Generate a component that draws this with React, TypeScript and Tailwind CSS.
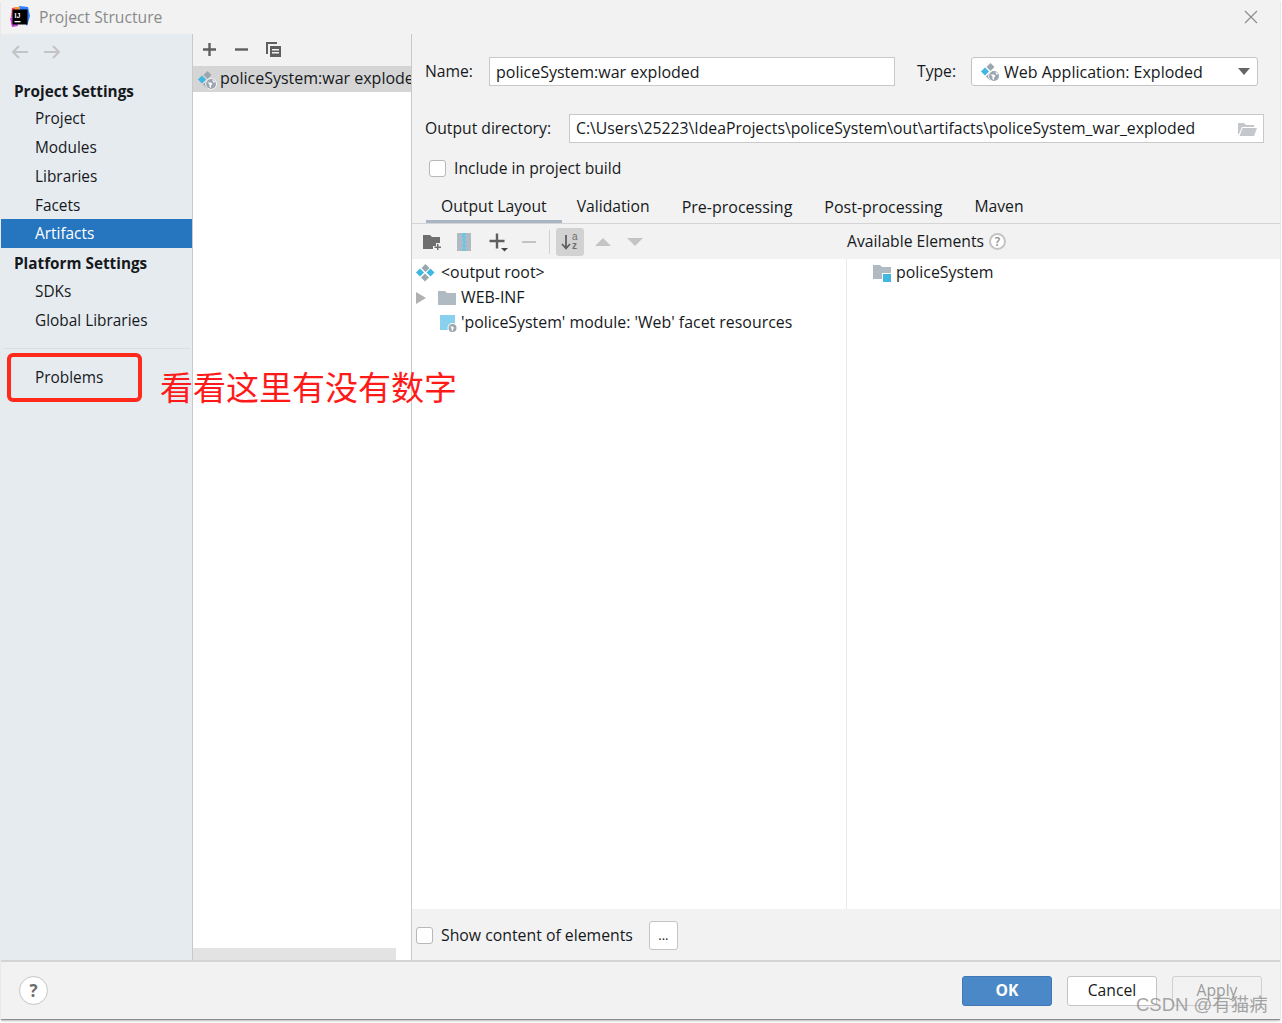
import { ReactNode } from "react";

const FONT = "font-['Open_Sans','Noto_Sans','Noto_Sans_CJK_SC',sans-serif]";

function ArtifactIcon({ globe = true }: { globe?: boolean }) {
  return (
    <svg width="20" height="20" viewBox="0 0 20 20" className="shrink-0">
      <path d="M5 5.500 9 9.500l-4 4-4-4z" fill="#40b6e0" />
      <path d="M10.500 1 14.500 5l-4 4-4-4z" fill="#9aa7b0" />
      <path d="M10 10.500 14 14.500l-4 4-4-4z" fill="#9aa7b0" />
      {globe ? (
        <g>
          <circle cx="14" cy="14" r="5.800" fill="#fff" />
          <circle cx="14" cy="14" r="5" fill="#9aa7b0" />
          <path d="M10.500 12.500h3.500l1.500 1.500-1.500 1.500v2.500l-1.500-1v-2.500zM15 9.800l3 1.500-1 2z" fill="#fff" />
        </g>
      ) : (
        <path d="M15.500 5.500 19.500 9.500l-4 4-4-4z" fill="#40b6e0" />
      )}
    </svg>
  );
}

function Folder({ className = "" }: { className?: string }) {
  return (
    <svg width="18" height="14" viewBox="0 0 18 14" className={className}>
      <path d="M0 0h7l2 2h9v12H0z" fill="#b0bac3" />
    </svg>
  );
}

function NavRow({ label, active = false }: { label: string; active?: boolean }) {
  return (
    <div className={`h-[29px] flex items-center pl-[34px] text-[15.4px] ${active ? "bg-[#2675bf] text-white" : "text-[#16191c]"}`}>
      {label}
    </div>
  );
}

function Tab({ children, active = false }: { children: ReactNode; active?: boolean }) {
  return (
    <div className={`h-[29px] pb-[1px] flex items-center justify-center border-b-[3px] ${active ? "border-[#a8b5c5] px-[15px]" : "border-transparent px-[16px]"}`}>
      {children}
    </div>
  );
}

function Checkbox() {
  return <div className="w-[17px] h-[17px] bg-white border border-[#b8b8b8] rounded-[3px] shrink-0" />;
}

export default function App() {
  return (
    <div className={`${FONT} relative w-[1282px] h-[1023px] bg-white overflow-hidden text-[15.7px] text-[#16191c]`}>
      <div className="h-[1020px] mx-px mr-[2px] bg-[#f2f2f2] border-b border-[#8c8c8c] flex flex-col shadow-[0_1px_2px_#bbb]">
        {/* title bar */}
        <div className="h-[34px] flex items-center pl-[8px] pr-[22px] shrink-0">
          <svg width="22" height="22" viewBox="0 0 22 22">
            <path d="M3 2 10 1 7 12 2 11z" fill="#ff3f6c" />
            <path d="M10 0l9 1 2 9-3 10-6-8z" fill="#2f7dff" />
            <path d="M1 12l6-2 2 10-6 1z" fill="#c13fd6" />
            <path d="M5 1l6 0-3 8z" fill="#ff9a2e" />
            <rect x="3.500" y="3.500" width="15" height="15" fill="#000" />
            <text x="5.500" y="11.500" fontSize="7" fontWeight="700" fill="#fff" fontFamily="Liberation Sans">IJ</text>
            <rect x="5.500" y="15" width="6" height="1.300" fill="#fff" />
          </svg>
          <span className="ml-[8px] pt-[2px] text-[#8a8a8a] text-[15.700px]">Project Structure</span>
          <svg width="14" height="14" viewBox="0 0 14 14" className="ml-auto" stroke="#8c8c8c" strokeWidth="1.200">
            <path d="M1 1l12 12M13 1 1 13" />
          </svg>
        </div>

        <div className="flex-1 flex min-h-0">
          {/* sidebar */}
          <div className="w-[191px] bg-[#e6ebf0] border-r border-[#c9c9c9] box-content shrink-0">
            <div className="h-[36px] flex items-center pl-[10px] gap-[14px]">
              <svg width="18" height="14" viewBox="0 0 18 14" fill="none" stroke="#c4c4c4" strokeWidth="2"><path d="M17 7H2M8 1 2 7l6 6" /></svg>
              <svg width="18" height="14" viewBox="0 0 18 14" fill="none" stroke="#c4c4c4" strokeWidth="2"><path d="M1 7h15M10 1l6 6-6 6" /></svg>
            </div>
            <div className="h-[33px] pt-[9px] pl-[13px] font-bold text-[15.300px] leading-[24px]">Project Settings</div>
            <div className="[&>div]:pt-[2px]">
              <NavRow label="Project" />
              <NavRow label="Modules" />
              <NavRow label="Libraries" />
              <NavRow label="Facets" />
            </div>
            <NavRow label="Artifacts" active />
            <div className="h-[29px] pt-[2px] pl-[13px] flex items-center font-bold text-[15.300px]">Platform Settings</div>
            <NavRow label="SDKs" />
            <NavRow label="Global Libraries" />
            <div className="h-[14px] flex items-end mx-[2px]"><div className="w-full h-px bg-[#dadee2]" /></div>
            <div className="h-[43px] flex items-center pl-[34px] mt-[7px] text-[15.4px]">Problems</div>
          </div>

          {/* artifact list */}
          <div className="w-[218px] bg-white border-r border-[#c9c9c9] box-content shrink-0 flex flex-col">
            <div className="h-[30px] pb-[2px] bg-[#f2f2f2] border-b border-[#d4d4d4] flex items-center pl-[8px] gap-[15px] shrink-0 box-content">
              <svg width="17" height="17" viewBox="0 0 17 17" fill="#5f5f5f"><path d="M7.300 2h2.400v5.300H15v2.400H9.700V15H7.300V9.700H2V7.300h5.300z" /></svg>
              <svg width="17" height="17" viewBox="0 0 17 17" fill="#5f5f5f"><rect x="2" y="7.300" width="13" height="2.400" /></svg>
              <svg width="17" height="17" viewBox="0 0 17 17" fill="#5f5f5f"><path d="M1 1h11v2H3v10H1z" /><path d="M5 5h11v11H5zm2 3v1.500h7V8zm0 3v1.500h7V11z" fillRule="evenodd" /></svg>
            </div>
            <div className="h-[25px] bg-[#d5d5d5] flex items-center pl-[4px] gap-[3px] overflow-hidden whitespace-nowrap shrink-0">
              <ArtifactIcon />
              <span className="text-[16px] pb-[3px]">policeSystem:war exploded</span>
            </div>
            <div className="mt-auto h-[12px] mr-[15px] bg-[#e3e3e3]" />
          </div>

          {/* artifact editor */}
          <div className="flex-1 min-w-0 flex flex-col">
            <div className="h-[23px] shrink-0" />
            <div className="flex items-center h-[29px] pl-[13px] pr-[22px] shrink-0">
              <span className="w-[64px]">Name:</span>
              <div className="w-[406px] h-[29px] bg-white border border-[#c9c9c9] flex items-center pl-[6px] text-[16px]">policeSystem:war exploded</div>
              <span className="ml-[22px] w-[54px]">Type:</span>
              <div className="flex-1 h-[29px] bg-white border border-[#c4c4c4] rounded-[3px] flex items-center pl-[8px] pr-[7px] gap-[4px] text-[16px]">
                <ArtifactIcon />
                <span>Web Application: Exploded</span>
                <span className="ml-auto w-0 h-0 border-l-[6px] border-r-[6px] border-t-[7px] border-l-transparent border-r-transparent border-t-[#666]" />
              </div>
            </div>
            <div className="flex items-center h-[29px] mt-[28px] pl-[13px] pr-[16px] shrink-0">
              <span className="w-[144px] whitespace-nowrap">Output directory:</span>
              <div className="flex-1 h-[29px] bg-white border border-[#c9c9c9] flex items-center pl-[6px] pr-[6px] text-[15.780px] whitespace-nowrap">
                <span>C:\Users\25223\IdeaProjects\policeSystem\out\artifacts\policeSystem_war_exploded</span>
                <svg width="19" height="15" viewBox="0 0 19 15" fill="#c4c8cc" className="ml-auto shrink-0">
                  <path d="M0 2h6l2 2h8v2H4L1 13H0z" />
                  <path d="M4.500 7H19l-3 8H1.500z" />
                </svg>
              </div>
            </div>
            <div className="flex items-center h-[17px] mt-[17px] pl-[17px] gap-[8px] shrink-0">
              <Checkbox />
              <span>Include in project build</span>
            </div>
            <div className="mt-[17px] h-[29px] pl-[14px] flex border-b border-[#d4d4d4] box-content shrink-0 -mb-px">
              <Tab active>Output Layout</Tab>
              <div className="flex -ml-px">
                <Tab>Validation</Tab>
                <Tab><span className="text-[16px]">Pre-processing</span></Tab>
                <Tab><span className="text-[16px]">Post-processing</span></Tab>
                <Tab>Maven</Tab>
              </div>
            </div>

            {/* toolbar */}
            <div className="h-[36px] flex items-center shrink-0">
              <div className="w-[434px] flex items-center pl-[11px] pt-[2px] shrink-0 h-full">
                <svg width="18" height="16" viewBox="0 0 18 16" fill="#6e6e6e"><path d="M0 1h7l2 2h8v6h-4v3h-3v3H0z" /><path d="M14 10h1.500v2.500H18V14h-2.500v2H14v-2h-2.500v-1.500H14z" /></svg>
                <svg width="14" height="18" viewBox="0 0 14 18" className="ml-[16px]"><rect width="14" height="18" fill="#b0bac3" /><path d="M5 0h4v2H8v2h1v2H8v2h1v2H8v2h1v2H8v2h1v2H5v-2h1v-2H5v-2h1V8H5V6h1V4H5z" fill="#6fc5e8" /></svg>
                <svg width="20" height="20" viewBox="0 0 20 20" className="ml-[18px]" fill="#5f5f5f"><path d="M6.800 1.500h2.400V7.800h6.300v2.400H9.200v6.300H6.800v-6.300H.5V7.800h6.300z" /><path d="M12 16h7l-3.500 3.500z" fill="#444" /></svg>
                <svg width="14" height="14" viewBox="0 0 14 14" className="ml-[13px]"><rect y="6" width="14" height="2" fill="#c4c4c4" /></svg>
                <div className="w-px h-[24px] bg-[#d0d0d0] ml-[13px]" />
                <div className="w-[28px] h-[28px] rounded-[3px] bg-[#d2d2d2] ml-[6px] flex items-center justify-center">
                  <svg width="20" height="20" viewBox="0 0 20 20" fill="none">
                    <path d="M6 3v13M2 12l4 4.500 4-4.500" stroke="#5f5f5f" strokeWidth="1.800" />
                    <text x="12" y="8" fontSize="10" fill="#6e6e6e" fontFamily="Liberation Sans">a</text>
                    <text x="12" y="17" fontSize="10" fontWeight="700" fill="#6e6e6e" fontFamily="Liberation Sans">z</text>
                  </svg>
                </div>
                <span className="ml-[11px] w-0 h-0 border-l-[8px] border-r-[8px] border-b-[8px] border-l-transparent border-r-transparent border-b-[#c4c4c4]" />
                <span className="ml-[16px] w-0 h-0 border-l-[8px] border-r-[8px] border-t-[8px] border-l-transparent border-r-transparent border-t-[#c4c4c4]" />
              </div>
              <div className="pl-[1px] pt-[2px] flex items-center gap-[5px]">
                <span>Available Elements</span>
                <span className="w-[17px] h-[17px] rounded-full border-2 border-[#c4c4c4] bg-white text-[#8f8f8f] text-[12px] font-semibold flex items-center justify-center">?</span>
              </div>
            </div>

            {/* output tree */}
            <div className="flex-1 bg-white flex min-h-0 text-[15.900px]">
              <div className="w-[435px] border-r border-[#e8e8e8] shrink-0 pt-[1px]">
                <div className="h-[25px] flex items-center pl-[3px] gap-[6px]">
                  <ArtifactIcon globe={false} />
                  <span>&lt;output root&gt;</span>
                </div>
                <div className="h-[25px] flex items-center pl-[4px]">
                  <span className="w-0 h-0 border-t-[6px] border-b-[6px] border-l-[10px] border-t-transparent border-b-transparent border-l-[#b0b0b0]" />
                  <Folder className="ml-[12px]" />
                  <span className="ml-[5px]">WEB-INF</span>
                </div>
                <div className="h-[25px] flex items-center pl-[27px]">
                  <svg width="19" height="20" viewBox="0 0 19 20" className="shrink-0">
                    <path d="M1 2h15v15H1z" fill="#87d0ee" />
                    <circle cx="13.500" cy="15" r="5" fill="#fff" />
                    <circle cx="13.500" cy="15" r="4" fill="#9aa7b0" />
                    <path d="M11 13.500h3l1 1.500-1 1.500v1.500l-1.500-1v-2z" fill="#fff" />
                  </svg>
                  <span className="ml-[3px] whitespace-nowrap">'policeSystem' module: 'Web' facet resources</span>
                </div>
              </div>
              <div className="flex-1 pt-[1px] pl-[26px]">
                <div className="h-[25px] flex items-center gap-[5px]">
                  <div className="relative w-[18px] h-[15px]">
                    <Folder />
                    <span className="absolute right-0 bottom-[-2px] w-[8px] h-[8px] bg-[#40b6e0] border-t border-l border-white box-content" />
                  </div>
                  <span>policeSystem</span>
                </div>
              </div>
            </div>

            {/* bottom options */}
            <div className="h-[51px] pt-[2px] flex items-center pl-[4px] gap-[8px] shrink-0 text-[15.800px]">
              <Checkbox />
              <span>Show content of elements</span>
              <div className="ml-[8px] w-[29px] h-[29px] bg-white border border-[#c4c4c4] rounded-[3px] flex items-center justify-center text-[13px]">...</div>
            </div>
          </div>
        </div>

        {/* footer */}
        <div className="h-[59px] border-t-2 border-[#d4d4d4] flex items-center pl-[18px] pr-[18px] shrink-0">
          <div className="w-[29px] h-[29px] rounded-full bg-white border border-[#c4c4c4] text-[#6e6e6e] font-bold text-[17px] flex items-center justify-center">?</div>
          <button className="ml-auto w-[90px] h-[30px] bg-[#4a88c7] border border-[#3f78b3] rounded-[3px] text-white font-bold">OK</button>
          <button className="ml-[15px] w-[90px] h-[30px] bg-white border border-[#c4c4c4] rounded-[3px]">Cancel</button>
          <button className="ml-[15px] w-[90px] h-[30px] bg-[#f2f2f2] border border-[#d0d0d0] rounded-[3px] text-[#9a9a9a]">Apply</button>
        </div>
      </div>

      {/* annotation on top of the screenshot */}
      <div className="absolute left-[7px] top-[353px] w-[135px] h-[49px] border-[4px] border-[#ff2a1c] rounded-[6px]" />
      <div className="absolute left-[160px] top-[363px] text-[33px] leading-[46px] text-[#ff1a1a] whitespace-nowrap font-['Noto_Sans_CJK_SC',sans-serif]">看看这里有没有数字</div>
      {/* watermark */}
      <div className="absolute left-[1136px] top-[992px] text-[18.500px] leading-[26px] text-[#8f8f8f]/80 whitespace-nowrap font-['Liberation_Sans','Noto_Sans_CJK_SC',sans-serif]">CSDN @有猫病</div>
    </div>
  );
}
